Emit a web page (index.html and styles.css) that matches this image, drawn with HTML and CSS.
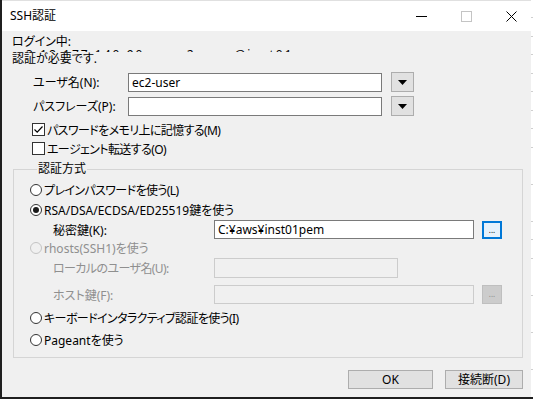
FILE: index.html
```html
<!DOCTYPE html>
<html lang="ja">
<head>
<meta charset="utf-8">
<title>SSH認証</title>
<link rel="stylesheet" href="styles.css">
</head>
<body>
<div class="screen">
  <div class="main">
    <div class="window">
      <div class="titlebar">
        <span class="title">SSH認証</span>
        <div class="caption">
          <span class="cap-btn"><svg width="11" height="11" viewBox="0 0 11 11"><line x1="0" y1="5.5" x2="11" y2="5.5" stroke="#000" stroke-width="1"/></svg></span>
          <span class="cap-btn"><svg width="11" height="11" viewBox="0 0 11 11"><rect x="0.5" y="0.5" width="10" height="10" fill="none" stroke="#c4c4c4" stroke-width="1"/></svg></span>
          <span class="cap-btn"><svg width="11" height="11" viewBox="0 0 11 11"><path d="M0.5 0.5 L10.5 10.5 M10.5 0.5 L0.5 10.5" stroke="#000" stroke-width="1" fill="none"/></svg></span>
        </div>
      </div>

      <div class="content">
        <div class="status">
          <div class="line">ログイン中:</div>
          <div class="clip"><span>3.18.177.140.90 ... ec2-user@inst01 ...</span></div>
          <div class="line">認証が必要です.</div>
        </div>

        <div class="form-row first">
          <span class="lbl">ユーザ名(N):</span>
          <div class="edit">ec2-user</div>
          <span class="drop"><svg width="9" height="5" viewBox="0 0 9 5"><path d="M0 0 H9 L4.5 5 Z" fill="#000"/></svg></span>
        </div>
        <div class="form-row second">
          <span class="lbl">パスフレーズ(P):</span>
          <div class="edit"></div>
          <span class="drop"><svg width="9" height="5" viewBox="0 0 9 5"><path d="M0 0 H9 L4.5 5 Z" fill="#000"/></svg></span>
        </div>

        <div class="check-row first-check">
          <span class="cbox"><svg width="13" height="13" viewBox="0 0 13 13"><path d="M2.5 6.5 L5.2 9.2 L10.5 3.5" stroke="#000" stroke-width="1.2" fill="none"/></svg></span>
          <span class="cjk">パスワードをメモリ上に記憶する(M)</span>
        </div>
        <div class="check-row">
          <span class="cbox"></span>
          <span class="cjk">エージェント転送する(O)</span>
        </div>

        <fieldset class="group">
          <legend>認証方式</legend>
          <div class="opt h20"><span class="radio"></span><span class="cjk">プレインパスワードを使う(L)</span></div>
          <div class="opt h20"><span class="radio on"></span><span>RSA/DSA/ECDSA/ED25519鍵を使う</span></div>
          <div class="sub h19">
            <span class="sublbl">秘密鍵(K):</span>
            <div class="edit wide">C:¥aws¥inst01pem</div>
            <span class="dots focus">...</span>
          </div>
          <div class="opt h17 disabled"><span class="radio off"></span><span>rhosts(SSH1)を使う</span></div>
          <div class="sub h24 disabled">
            <span class="sublbl cjk">ローカルのユーザ名(U):</span>
            <div class="edit short off tall"></div>
          </div>
          <div class="sub h29 disabled">
            <span class="sublbl">ホスト鍵(F):</span>
            <div class="edit wide off"></div>
            <span class="dots off">...</span>
          </div>
          <div class="opt h17"><span class="radio"></span><span class="cjk">キーボードインタラクティブ認証を使う(I)</span></div>
          <div class="opt h27"><span class="radio"></span><span>Pageantを使う</span></div>
        </fieldset>

        <div class="buttons">
          <span class="btn ok">OK</span>
          <span class="btn cancel">接続断(D)</span>
        </div>
      </div>
    </div>
    <div class="edge"></div>
  </div>
  <div class="bottom"></div>
</div>
</body>
</html>
```

FILE: styles.css
```css
* { box-sizing: border-box; }
html, body { margin: 0; padding: 0; }
body {
  width: 533px;
  height: 399px;
  overflow: hidden;
  background: #fff;
  font-family: "Noto Sans", "Noto Sans CJK JP", sans-serif;
  font-size: 12px;
  color: #000;
  font-feature-settings: "palt";
}
.cjk { letter-spacing: -0.6px; }
.screen { display: flex; flex-direction: column; height: 399px; }
.main { display: flex; height: 397px; }
.window {
  width: 531px;
  height: 397px;
  border-left: 2px solid #1f1f1f;
  background: #f0f0f0;
  display: flex;
  flex-direction: column;
  overflow: hidden;
}
.edge {
  width: 2px;
  background: repeating-linear-gradient(to bottom, #fff 0 17.5px, #cfcfcf 17.5px 18.5px);
}
.bottom { height: 2px; background: #1f1f1f; }

.titlebar {
  height: 31px;
  background: #fff;
  display: flex;
  align-items: center;
  border-top: 1px solid #e0e0e0;
}
.title { padding-left: 8px; line-height: 14px; }
.caption { margin-left: auto; margin-right: -3px; display: flex; }
.cap-btn {
  width: 45px;
  height: 30px;
  display: flex;
  align-items: center;
  justify-content: center;
}

.content { padding: 0 8px 0 10px; display: flex; flex-direction: column; }
.status { padding-top: 4px; }
.line { line-height: 13px; height: 13px; white-space: nowrap; }
.clip { height: 4px; overflow: hidden; white-space: nowrap; padding-left: 14px; letter-spacing: 2px; }
.clip span { display: block; line-height: 12px; margin-top: 1px; }

.form-row { display: flex; align-items: center; height: 20px; padding-left: 21px; }
.form-row.first { margin-top: 7px; }
.form-row.second { margin-top: 4px; }
.lbl { width: 95px; white-space: nowrap; }
.edit {
  width: 254px;
  height: 19px;
  background: #fff;
  border: 1px solid #7a7a7a;
  padding: 0 3px;
  line-height: 17px;
  white-space: nowrap;
  overflow: hidden;
}
.drop {
  width: 23px;
  height: 20px;
  margin-left: 9px;
  background: #e1e1e1;
  border: 1px solid #adadad;
  display: flex;
  align-items: center;
  justify-content: center;
  padding-top: 1px;
}

.check-row { display: flex; align-items: center; height: 19px; padding-left: 20px; white-space: nowrap; }
.check-row.first-check { margin-top: 4px; }
.cbox {
  width: 13px;
  height: 13px;
  border: 1px solid #333;
  background: #fff;
  margin-right: 2px;
  display: flex;
  align-items: center;
  justify-content: center;
}
.cbox svg { margin: -1px; }

.group {
  margin: 4px 0 0 1px;
  padding: 4px 0 4px 16px;
  border: 1px solid #d5d5d5;
  min-width: 0;
}
.group legend {
  margin-left: 7px;
  padding: 0 1px;
  line-height: 14px;
}
.opt { display: flex; align-items: center; white-space: nowrap; }
.radio {
  width: 12px;
  height: 12px;
  border: 1px solid #333;
  border-radius: 50%;
  background: #fff;
  margin-right: 2px;
  display: flex;
  align-items: center;
  justify-content: center;
}
.radio.on::after {
  content: "";
  width: 6px;
  height: 6px;
  border-radius: 50%;
  background: #1a1a1a;
}
.radio.off { border-color: #c4c4c4; background: #f0f0f0; }
.h17 { height: 17px; }
.h19 { height: 19px; }
.h20 { height: 20px; }
.h24 { height: 24px; }
.h27 { height: 27px; }
.h29 { height: 29px; }

.sub { display: flex; align-items: center; padding-left: 23px; }
.sublbl { width: 161px; white-space: nowrap; }
.edit.wide { width: 260px; }
.edit.short { width: 184px; }
.edit.tall { height: 20px; }
.edit.off { background: #f0f0f0; border-color: #cccccc; }
.disabled { color: #8f8f8f; }

.dots {
  width: 20px;
  height: 18px;
  margin-left: 8px;
  font-size: 8px;
  line-height: 14px;
  text-align: center;
  color: #000;
  background: #e5f1fb;
  border: 2px solid #0078d7;
}
.dots.off { background: #cccccc; border: 1px solid #bfbfbf; color: #8a8a8a; line-height: 16px; height: 19px; }

.buttons {
  display: flex;
  justify-content: flex-end;
  gap: 12px;
  margin-top: 12px;
}
.btn {
  height: 19px;
  background: #e1e1e1;
  border: 1px solid #adadad;
  text-align: center;
  line-height: 17px;
  white-space: nowrap;
}
.btn.ok { width: 85px; }
.btn.cancel { width: 78px; }
```
